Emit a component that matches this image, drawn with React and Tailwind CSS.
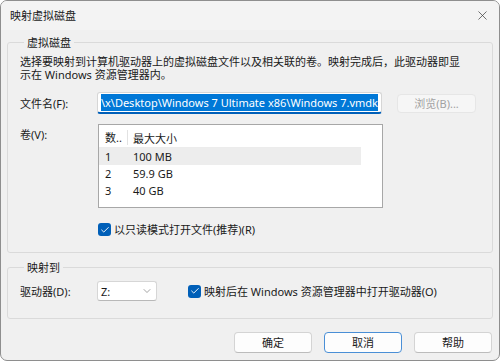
import { Check, ChevronDown, X } from 'lucide-react'

const FONT = "font-['Segoe_UI','Noto_Sans','Noto_Sans_CJK_SC',sans-serif]"

const VOLUMES = [
  { n: '1', size: '100 MB', active: true },
  { n: '2', size: '59.9 GB' },
  { n: '3', size: '40 GB' },
]

function CheckBox() {
  return (
    <span className="flex h-[13px] w-[13px] shrink-0 items-center justify-center rounded-[3px] bg-[#005fb8]">
      <Check size={10} strokeWidth={2.2} className="text-white" />
    </span>
  )
}

function DialogButton({ children, primary }) {
  return (
    <button
      type="button"
      className={
        'h-[21px] w-[78px] rounded-[4px] border bg-[#fdfdfd] text-[11px] leading-[13px] text-[#1a1a1a] ' +
        (primary ? 'border-[#4a8fd6]' : 'border-[#d4d4d4] border-b-[#bcbcbc]')
      }
    >
      {children}
    </button>
  )
}

export default function App() {
  return (
    <div
      className={`${FONT} flex h-[361px] w-[500px] flex-col overflow-hidden rounded-[7px] border border-[#8e8e8e] bg-[#f0f0f0] text-[11px] leading-[13px] text-[#1a1a1a]`}
    >
      <div className="flex h-[29px] shrink-0 items-center justify-between pl-[9px] pr-[9px] bg-[#f3f3f3]">
        <span>映射虚拟磁盘</span>
        <X size={15} strokeWidth={1.1} className="text-[#333]" />
      </div>

      <div className="flex flex-1 flex-col px-[6px]">
        <fieldset className="mt-[6px] rounded-[3px] border border-[#dadada] pb-[16px] pl-[12px]">
          <legend className="ml-[4px] px-[3px]">虚拟磁盘</legend>
          <p className="mt-[6px] w-[448px]">
            选择要映射到计算机驱动器上的虚拟磁盘文件以及相关联的卷。映射完成后，此驱动器即显示在 Windows 资源管理器内。
          </p>

          <div className="mt-[11px] flex items-center">
            <span className="w-[77px]">文件名(F):</span>
            <div className="flex h-[22px] w-[285px] items-center justify-end overflow-hidden rounded-[3px] border border-[#d6d6d6] border-b-2 border-b-[#005fb8] bg-white pr-[3px]">
              <span className="whitespace-nowrap bg-[#0078d7] py-[2px] text-white">
                \x\Desktop\Windows 7 Ultimate x86\Windows 7.vmdk
              </span>
            </div>
            <button
              type="button"
              className="ml-[15px] h-[19px] w-[79px] rounded-[4px] border border-[#e6e6e6] bg-[#f6f6f6] text-[#a2a2a2]"
            >
              浏览(B)...
            </button>
          </div>

          <div className="mt-[10px] flex items-start">
            <span className="w-[78px] pt-[4px]">卷(V):</span>
            <div className="h-[84px] w-[285px] border border-[#a7a7a7] bg-white">
              <div className="w-[262px]">
                <div className="flex h-[23px] items-end border-b border-[#ececec] pb-[2px]">
                  <span className="w-[29px] border-r border-[#e2e2e2] pl-[6px] leading-[15px]">数..</span>
                  <span className="pl-[5px]">最大大小</span>
                </div>
                {VOLUMES.map((v) => (
                  <div
                    key={v.n}
                    className={'flex h-[17px] items-center ' + (v.active ? 'bg-[#ededed]' : '')}
                  >
                    <span className="w-[29px] pl-[6px]">{v.n}</span>
                    <span className="pl-[5px]">{v.size}</span>
                  </div>
                ))}
              </div>
            </div>
          </div>

          <div className="ml-[78px] mt-[15px] flex items-center gap-[3px]">
            <CheckBox />
            <span>以只读模式打开文件(推荐)(R)</span>
          </div>
        </fieldset>

        <fieldset className="mt-[8px] rounded-[3px] border border-[#dadada] pb-[17px] pl-[12px]">
          <legend className="ml-[4px] px-[3px]">映射到</legend>
          <div className="mt-[7px] flex items-center">
            <span className="w-[77px]">驱动器(D):</span>
            <div className="flex h-[20px] w-[60px] items-center justify-between rounded-[3px] border border-[#d6d6d6] border-b-[#b8b8b8] bg-white pl-[3px] pr-[3px]">
              <span>Z:</span>
              <ChevronDown size={12} strokeWidth={1.2} className="text-[#666]" />
            </div>
            <div className="ml-[31px] flex items-center gap-[3px]">
              <CheckBox />
              <span>映射后在 Windows 资源管理器中打开驱动器(O)</span>
            </div>
          </div>
        </fieldset>

        <div className="mt-[13px] flex justify-end gap-[12px] pr-[1px]">
          <DialogButton>确定</DialogButton>
          <DialogButton primary>取消</DialogButton>
          <DialogButton>帮助</DialogButton>
        </div>
      </div>
    </div>
  )
}
